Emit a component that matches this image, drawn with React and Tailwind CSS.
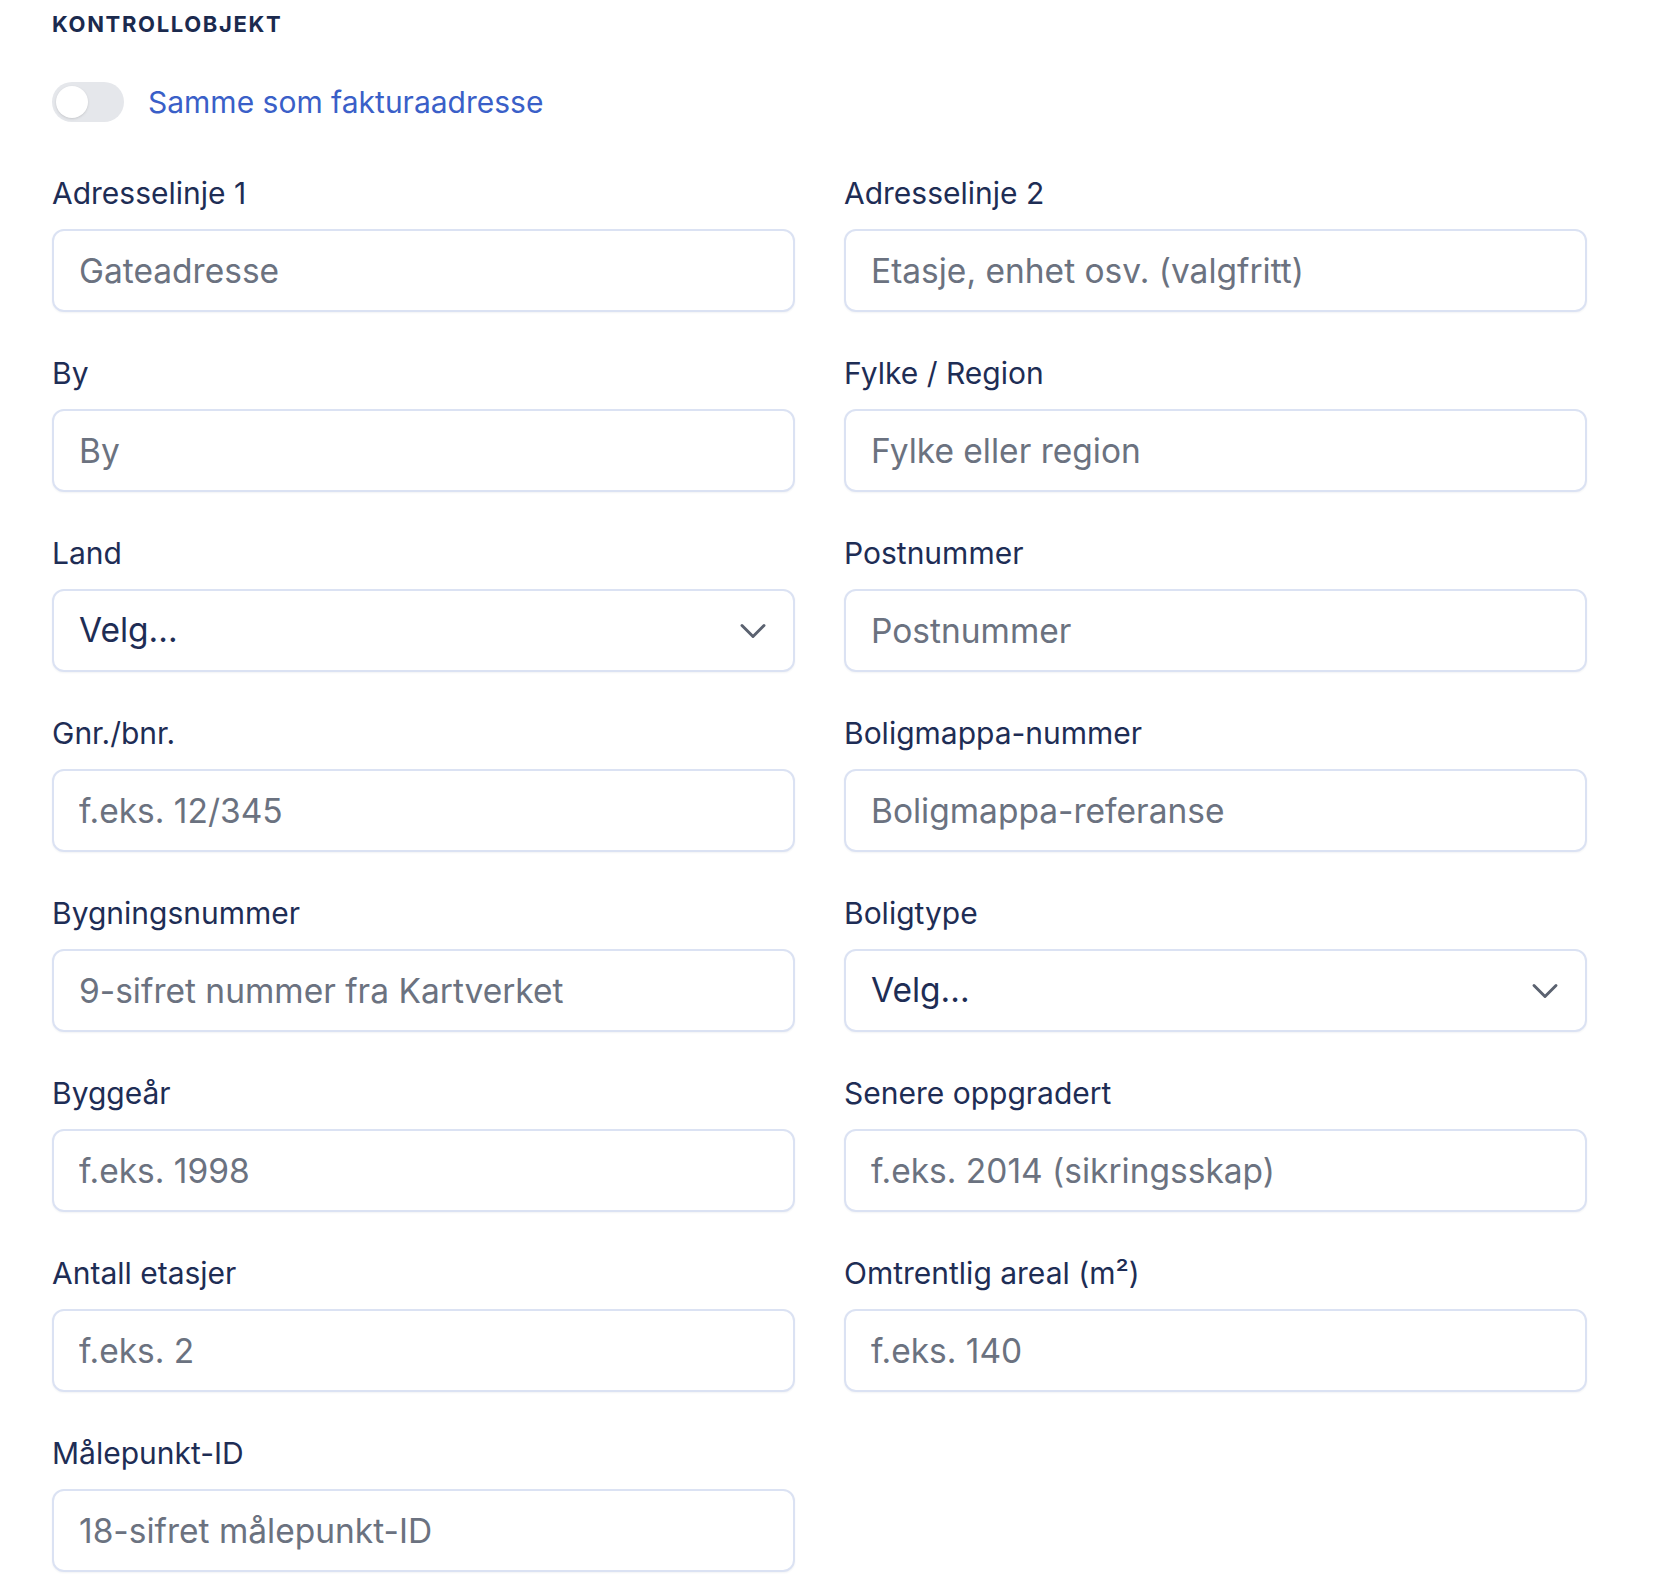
import { ChevronDown } from 'lucide-react';

const fields = [
  { label: 'Adresselinje 1', placeholder: 'Gateadresse' },
  { label: 'Adresselinje 2', placeholder: 'Etasje, enhet osv. (valgfritt)' },
  { label: 'By', placeholder: 'By' },
  { label: 'Fylke / Region', placeholder: 'Fylke eller region' },
  { label: 'Land', select: true },
  { label: 'Postnummer', placeholder: 'Postnummer' },
  { label: 'Gnr./bnr.', placeholder: 'f.eks. 12/345' },
  { label: 'Boligmappa-nummer', placeholder: 'Boligmappa-referanse' },
  { label: 'Bygningsnummer', placeholder: '9-sifret nummer fra Kartverket' },
  { label: 'Boligtype', select: true },
  { label: 'Byggeår', placeholder: 'f.eks. 1998' },
  { label: 'Senere oppgradert', placeholder: 'f.eks. 2014 (sikringsskap)' },
  { label: 'Antall etasjer', placeholder: 'f.eks. 2' },
  { label: 'Omtrentlig areal (m²)', placeholder: 'f.eks. 140' },
  { label: 'Målepunkt-ID', placeholder: '18-sifret målepunkt-ID' },
];

const boxClass =
  'h-[83px] w-full rounded-[12px] border-2 border-[#dbe2f3] bg-white shadow-[0_1px_2px_rgba(30,45,85,0.06)] text-[33.5px]';

function Field({ label, placeholder, select }) {
  return (
    <div className="flex flex-col">
      <label className="h-[40px] mb-[16px] text-[30px] leading-[40px] text-[#1e2d55]">{label}</label>
      {select ? (
        <div className={`${boxClass} flex items-center justify-between pl-[25px] pr-[18px] text-[#1e2d55]`}>
          <span>Velg...</span>
          <ChevronDown size={44} strokeWidth={1.6} className="text-[#5b6270]" />
        </div>
      ) : (
        <input
          type="text"
          placeholder={placeholder}
          className={`${boxClass} pl-[25px] outline-none text-[#1e2d55] placeholder:text-[#6b7280]`}
        />
      )}
    </div>
  );
}

export default function App() {
  return (
    <div
      className="min-h-[1592px] bg-white pl-[52px] pt-[6px]"
      style={{ fontFamily: 'Inter, "Noto Sans", sans-serif' }}
    >
      <h2 className="h-[36px] text-[22px] leading-[36px] font-bold tracking-[0.075em] text-[#1b2a4e]">KONTROLLOBJEKT</h2>

      <div className="mt-[40px] mb-[51px] flex items-center gap-[24px]">
        <div className="h-[40px] w-[72px] rounded-full bg-[#e5e7eb] p-[4px]">
          <div className="h-[32px] w-[32px] rounded-full bg-white shadow-sm" />
        </div>
        <span className="text-[30px] leading-[40px] text-[#3a5fc8]">Samme som fakturaadresse</span>
      </div>

      <div className="grid w-[1535px] grid-cols-2 gap-x-[49px] gap-y-[41px]">
        {fields.map((f) => (
          <Field key={f.label} {...f} />
        ))}
      </div>
    </div>
  );
}
